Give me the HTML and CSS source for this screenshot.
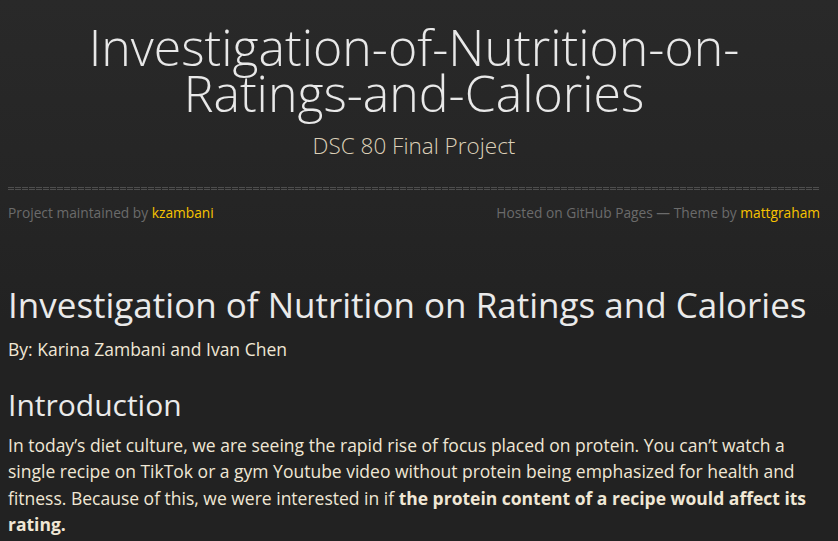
FILE: index.html
```html
<!DOCTYPE html>
<html lang="en">
<head>
<meta charset="utf-8">
<title>Investigation-of-Nutrition-on-Ratings-and-Calories</title>
<link rel="stylesheet" href="styles.css">
</head>
<body>
<div class="wrapper">
  <header class="site-header">
    <h1 class="site-title">Investigation-of-Nutrition-on-Ratings-and-Calories</h1>
    <h2 class="site-tagline">DSC 80 Final Project</h2>
    <div class="rule"></div>
    <div class="credits">
      <span>Project maintained by <a href="#">kzambani</a></span>
      <span>Hosted on GitHub Pages — Theme by <a href="#">mattgraham</a></span>
    </div>
  </header>
  <main class="content">
    <h1>Investigation of Nutrition on Ratings and Calories</h1>
    <p class="byline">By: Karina Zambani and Ivan Chen</p>
    <h2>Introduction</h2>
    <p>In today’s diet culture, we are seeing the rapid rise of focus placed on protein. You can’t watch a single recipe on TikTok or a gym Youtube video without protein being emphasized for health and fitness. Because of this, we were interested in if <strong>the protein content of a recipe would affect its rating.</strong></p>
  </main>
</div>
</body>
</html>
```

FILE: styles.css
```css
html, body {
  margin: 0;
  padding: 0;
}
body {
  background: linear-gradient(to bottom, #292929 0px, #252525 200px, #222222 320px, #222222 100%);
  background-color: #222222;
  color: #f0e7d5;
  font-family: "Open Sans", "Noto Sans", sans-serif;
  min-height: 541px;
}
.wrapper {
  margin: 0 18px 0 8px;
}
.site-header {
  padding-top: 24px;
  text-align: center;
}
.site-title {
  margin: 0;
  font-size: 50px;
  line-height: 46px;
  font-weight: 300;
  color: #e8e8e8;
  padding: 0 70px;
}
.site-tagline {
  margin: 15px 0 0;
  font-size: 22.5px;
  line-height: 30px;
  font-weight: 300;
  color: #dcd0b8;
}
.rule {
  margin-top: 26px;
  height: 3px;
  background-image:
    repeating-linear-gradient(to right, #4e4e4e 0 6px, transparent 6px 7px),
    repeating-linear-gradient(to right, #4e4e4e 0 6px, transparent 6px 7px);
  background-size: 100% 1px, 100% 1px;
  background-position: 0 0, 0 2px;
  background-repeat: no-repeat;
}
.credits {
  margin-top: 13px;
  display: flex;
  justify-content: space-between;
  font-size: 13.75px;
  line-height: 20px;
  color: #6b6b6b;
}
.credits a {
  color: #f8c300;
  text-decoration: none;
}
.content {
  margin-top: 62px;
}
.content h1 {
  margin: 0;
  font-size: 35px;
  line-height: 40px;
  font-weight: 400;
  color: #eaeaea;
}
.content .byline {
  margin: 11px 0 0;
  font-size: 17.5px;
  line-height: 26px;
}
.content h2 {
  margin: 25px 0 0;
  font-size: 30px;
  line-height: 36px;
  font-weight: 400;
  color: #eaeaea;
}
.content p {
  font-size: 17.5px;
  line-height: 26.3px;
}
.content h2 + p {
  margin: 9px 0 0;
}
.content strong {
  font-weight: 700;
}
```
